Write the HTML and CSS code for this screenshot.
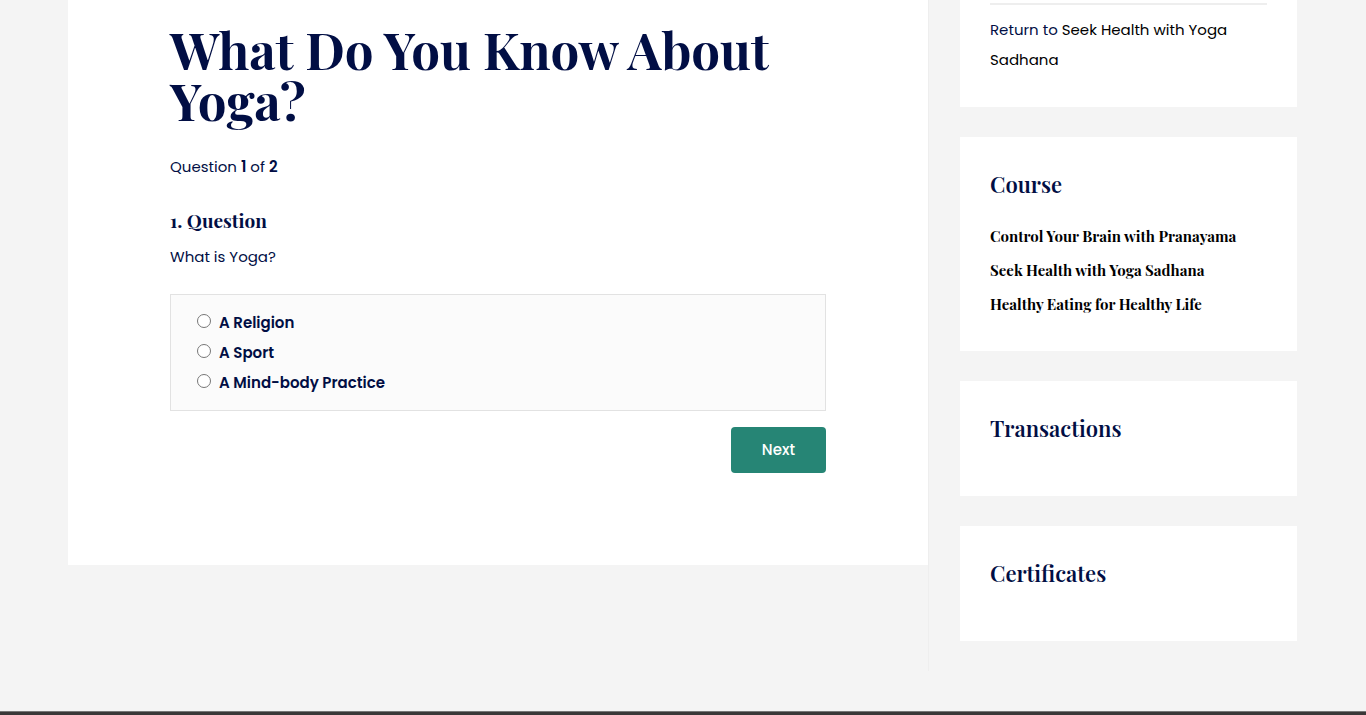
FILE: index.html
```html
<!DOCTYPE html>
<html lang="en">
<head>
<meta charset="utf-8">
<title>What Do You Know About Yoga?</title>
<link rel="stylesheet" href="styles.css">
</head>
<body>
<div class="layout">
  <div class="primary">
    <main class="quiz">
      <h1 class="quiz-title">What Do You Know About Yoga?</h1>
      <p class="progress">Question <b>1</b> of <b>2</b></p>
      <h2 class="question-number">1. Question</h2>
      <form class="quiz-form">
        <p class="question" id="question">What is Yoga?</p>
        <div class="answers" role="radiogroup" aria-labelledby="question">
          <label class="answer"><input type="radio" name="answer">A Religion</label>
          <label class="answer"><input type="radio" name="answer">A Sport</label>
          <label class="answer"><input type="radio" name="answer">A Mind-body Practice</label>
        </div>
        <button class="next" type="button">Next</button>
      </form>
    </main>
  </div>
  <aside class="sidebar">
    <section class="widget widget-return">
      <p class="return">Return to <a href="#">Seek Health with Yoga Sadhana</a></p>
    </section>
    <section class="widget">
      <h2 class="widget-title">Course</h2>
      <ul class="courses">
        <li><a href="#">Control Your Brain with Pranayama</a></li>
        <li><a href="#">Seek Health with Yoga Sadhana</a></li>
        <li><a href="#">Healthy Eating for Healthy Life</a></li>
      </ul>
    </section>
    <section class="widget widget-empty"><h2 class="widget-title">Transactions</h2></section>
    <section class="widget widget-empty"><h2 class="widget-title">Certificates</h2></section>
  </aside>
</div>
<footer class="footer"></footer>
</body>
</html>
```
FILE: styles.css
```css
* { box-sizing: border-box; }
body {
  margin: 0;
  background: #f4f4f4;
  color: #010e44;
  font: 400 15px/30px Poppins, "Open Sans", "Liberation Sans", sans-serif;
}
h1, h2, p, ul { margin: 0; padding: 0; }
a { color: #000; text-decoration: none; }
b { font-weight: 600; }
.layout {
  display: flex;
  max-width: 1230px;
  margin: 0 auto;
}
.primary {
  flex: 7 1 0;
  border-right: 1px solid #eee;
}
.quiz {
  padding: 24px 102px 92px;
  background: #fff;
}
.quiz-title, .question-number, .widget-title, .courses {
  font-family: "Playfair Display", "Liberation Serif", serif;
  font-weight: 700;
}
.quiz-title { font-size: 51px; line-height: 51px; }
.progress { margin-top: 26px; }
.question-number { margin-top: 23px; font-size: 19px; }
.question { margin-top: 7px; }
.quiz-form { display: flex; flex-direction: column; }
.answers {
  display: flex;
  flex-direction: column;
  margin-top: 22px;
  padding: 13px 26px 12px;
  border: 1px solid #e2e2e2;
  background: #fbfbfb;
}
.answer { display: flex; align-items: center; gap: 8px; font-weight: 600; }
.answer input { width: 14px; height: 14px; margin: 0 0 4px; }
.next {
  align-self: flex-end;
  margin-top: 16px;
  padding: 8px 31px;
  border: 0;
  border-radius: 4px;
  background: #268575;
  color: #fff;
  font: inherit;
  font-weight: 500;
}
.sidebar {
  display: flex;
  flex-direction: column;
  gap: 30px;
  width: 369px;
  padding: 0 1px 30px 31px;
}
.widget { padding: 30px; background: #fff; }
.widget-return { padding-top: 3px; }
.return { padding: 10px 0 2px; border-top: 2px solid #eee; }
.widget-title { font-size: 22px; font-weight: 600; line-height: 34px; }
.courses { margin-top: 18px; list-style: none; line-height: 34px; }
.widget-empty { padding-bottom: 51px; }
.footer { height: 20px; margin-top: 40px; background: #3a3838; border-top: 1px solid #777; }
```
